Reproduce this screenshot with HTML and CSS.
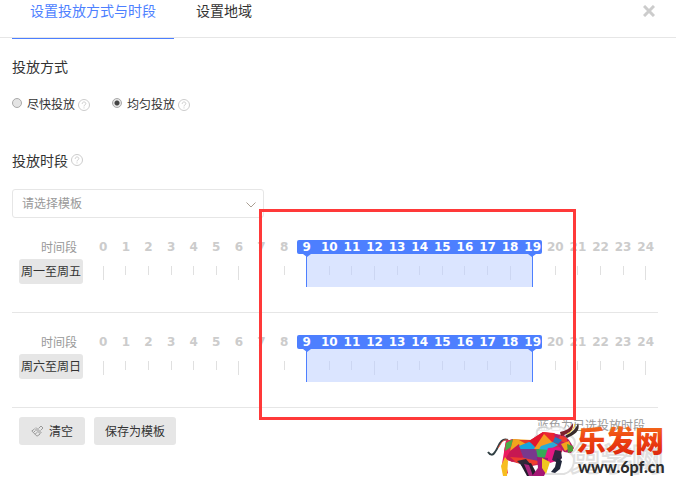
FILE: index.html
```html
<!DOCTYPE html>
<html lang="zh-CN">
<head>
    <meta charset="UTF-8">
    <meta name="viewport" content="width=device-width, initial-scale=1.0">
    <title>设置投放方式与时段</title>
    <link rel="stylesheet" href="styles.css">
</head>
<body>
    <header class="header">
        <nav class="tabs">
            <a href="#time" class="tab active">设置投放方式与时段</a>
            <a href="#area" class="tab">设置地域</a>
        </nav>
        <button class="close" aria-label="关闭">
            <svg width="12" height="12" viewBox="0 0 12 12"><path d="M1 1L11 11M11 1L1 11" stroke="#ccc" stroke-width="3"/></svg>
        </button>
    </header>

    <main class="content">
        <h2>投放方式</h2>
        <div class="modes">
            <div class="mode">
                <input type="radio" name="mode" id="fast">
                <label for="fast">尽快投放</label>
                <svg class="help" viewBox="0 0 12 12"><circle cx="6" cy="6" r="5.5"/><path d="M4.2 4.8C4.2 2.4 7.8 2.4 7.8 4.6C7.8 6 6 5.8 6 7.4M6 8.4V9.4"/></svg>
            </div>
            <div class="mode">
                <input type="radio" name="mode" id="even" checked>
                <label for="even">均匀投放</label>
                <svg class="help" viewBox="0 0 12 12"><circle cx="6" cy="6" r="5.5"/><path d="M4.2 4.8C4.2 2.4 7.8 2.4 7.8 4.6C7.8 6 6 5.8 6 7.4M6 8.4V9.4"/></svg>
            </div>
        </div>

        <h2 class="period-title">投放时段
            <svg class="help" viewBox="0 0 12 12"><circle cx="6" cy="6" r="5.5"/><path d="M4.2 4.8C4.2 2.4 7.8 2.4 7.8 4.6C7.8 6 6 5.8 6 7.4M6 8.4V9.4"/></svg>
        </h2>
        <div class="select-box">
            <select aria-label="请选择模板">
                <option>请选择模板</option>
            </select>
            <svg class="arrow" width="10" height="6" viewBox="0 0 10 6"><path d="M0.5 0.5L5 5L9.5 0.5" fill="none" stroke="#a99e92"/></svg>
        </div>

        <section class="schedule">
            <div class="row">
                <div class="row-label">
                    <span>时间段</span>
                    <button>周一至周五</button>
                </div>
                <div class="scale"></div>
            </div>
            <div class="row">
                <div class="row-label">
                    <span>时间段</span>
                    <button>周六至周日</button>
                </div>
                <div class="scale"></div>
            </div>
            <div class="frame"></div>
        </section>

        <footer class="footer">
            <button class="clear">
                <svg width="13" height="12" viewBox="0 0 13 12" fill="none" stroke="#999"><path d="M7.5 3.5L10 1L12 3L9.5 5.5M5 2.5L10.5 8M4 3.5L9.5 9M3.5 4L0.8 6L6 11.2L9 9.2M2.5 7.5L4.5 5.5M4.2 9.2L6.2 7.2"/></svg>
                清空
            </button>
            <button>保存为模板</button>
            <span class="note">蓝色为已选投放时段</span>
            <svg class="logo" width="190" height="66" viewBox="484 418 190 66">
                <defs>
                    <linearGradient id="fire" x1="0" y1="0" x2="0" y2="1">
                        <stop offset="0" stop-color="#f58220"/>
                        <stop offset="0.5" stop-color="#ee4312"/>
                        <stop offset="1" stop-color="#d8200c"/>
                    </linearGradient>
                </defs>
                <g class="ghost">
                    <path d="M537 435C535 427 545 425 549 429C556 424 568 427 567 435C578 437 576 447 570 449C577 457 575 471 564 474H541C536 474 536 468 541 467C533 461 535 452 543 450C535 449 532 439 537 435Z"/>
                    <text x="570" y="470">兔学网</text>
                </g>
                <path d="M508 440C500 437 499 447 495 452C493 456 490 455 488 452" fill="none" stroke="#303f43" stroke-width="2"/>
                <path d="M508 440C502 439 501 444 498 448" fill="none" stroke="#e5523c" stroke-width="1"/>
                <path d="M506 441L513 439L529 441L543 432L556 434L566 438L562 452L548 463L532 466L517 463L506 460L504 451Z" fill="#d02a4e"/>
                <path d="M506 441L513 439L511 453L505 459L508 473L504 476L502 464L504 452Z" fill="#ec1b5f"/>
                <path d="M505 457L508 461L507 476H503L501 466Z" fill="#f7bd20"/>
                <path d="M513 439L532 440L519 447L510 451Z" fill="#f2a51d"/>
                <path d="M519 440L532 440L526 444Z" fill="#e3392c"/>
                <path d="M506 443L513 439L511 447L505 451Z" fill="#4dac45"/>
                <path d="M510 451L519 444L523 457L512 462L506 458Z" fill="#c71852"/>
                <path d="M519 446L529 442L542 445L534 449L521 450Z" fill="#16a5dd"/>
                <path d="M520 449L534 449L545 457L542 462L524 459Z" fill="#79388d"/>
                <path d="M510 457L524 458L543 462L532 465L517 463Z" fill="#ee3e2e"/>
                <path d="M517 461L526 459L532 466L523 467Z" fill="#2f2738"/>
                <path d="M521 465L531 463L538 476H527Z" fill="#241d2d"/>
                <path d="M524 464L529 465L533 476H529Z" fill="#a7257c"/>
                <path d="M529 441L543 432L546 443L536 448Z" fill="#e3172e"/>
                <path d="M543 432L554 433L563 438L557 445L546 442Z" fill="#eb252f"/>
                <path d="M544 434L553 443L541 449L534 449Z" fill="#f79b21"/>
                <path d="M541 446L553 442L558 445L549 450L538 451Z" fill="#28acd9"/>
                <path d="M536 449L550 450L546 459L538 459Z" fill="#36a957"/>
                <path d="M548 448L561 447L559 460L550 463L544 460Z" fill="#e51882"/>
                <path d="M537 457L548 458L548 467L544 476H532L538 468Z" fill="#a51674"/>
                <path d="M542 458L550 462L546 474L542 468Z" fill="#f0c71f"/>
                <path d="M555 450L561 451L562 458L558 463L552 460Z" fill="#352540"/>
                <path d="M557 458L562 461L560 469L555 473L551 472L555 467Z" fill="#202739"/>
                <path d="M554 434L564 435L569 440L574 448L571 453L564 452L558 445Z" fill="#b71d68"/>
                <path d="M560 435L567 438L567 444L559 440Z" fill="#ee3c2e"/>
                <path d="M561 444L569 441L571 447L565 451Z" fill="#f3a31d"/>
                <path d="M567 444L573 446L573 451L568 453Z" fill="#4e9d38"/>
                <path d="M555 437L562 440L558 444L553 442Z" fill="#2674b8"/>
                <path d="M561 436C569 434 574 430 573 423C570 429 565 431 560 432Z" fill="#7d222c"/>
                <path d="M567 438C574 435 581 431 578 423C576 430 570 433 565 436Z" fill="#392c2b"/>
                <path d="M567 434C572 432 574 428 575 424" fill="none" stroke="#e6c322"/>
                <text class="brand" x="577" y="452">乐发网</text>
                <text class="site" x="578" y="473">www.6pf.cn</text>
            </svg>
        </footer>
    </main>

    <script>
        const start = 9;
        const end = 19;

        document.querySelectorAll('.scale').forEach(scale => {
            const area = `grid-column: ${start + 1} / ${end + 2}`;
            let html = `<div class="bar" style="${area}"></div><div class="range" style="${area}"></div>`;
            for (let h = 0; h <= 24; h++) {
                const on = h >= start && h <= end ? ' on' : '';
                const edge = h === start || h === end ? ' edge' : '';
                const big = h % 6 === 0 ? ' big' : '';
                html += `<div class="hour${on}${edge}${big}" style="grid-column: ${h + 1}">${h}</div>`;
            }
            scale.innerHTML = html;
        });
    </script>
</body>
</html>
```
FILE: styles.css
```css
body {
    font-family: "Noto Sans CJK SC", sans-serif;
    font-size: 12px;
    line-height: 16px;
    color: #333;
    background-color: #fff;
    margin: 0;
    min-height: 100vh;
}
button, select {
    font-family: inherit;
    font-size: 12px;
    line-height: 16px;
    color: #333;
    cursor: pointer;
}
button {
    background-color: #e6e6e6;
    border: none;
    border-radius: 3px;
    padding: 0;
}
.header {
    display: flex;
    justify-content: space-between;
    align-items: flex-start;
    height: 37px;
    border-bottom: 1px solid #e6e6e6;
    padding: 0 21px 0 12px;
}
.tabs {
    display: flex;
    gap: 4px;
}
.tab {
    height: 38px;
    padding: 0 18px;
    font-size: 14px;
    line-height: 20px;
    color: #333;
    text-decoration: none;
}
.tab.active {
    color: #4d7fff;
    border-bottom: 1px solid #4d7fff;
}
.close {
    display: flex;
    background: none;
    margin-top: 5px;
}
.content {
    padding: 18px 18px 43px 12px;
}
h2 {
    margin: 0;
    font-size: 14px;
    font-weight: normal;
    line-height: 20px;
}
.help {
    width: 12px;
    height: 12px;
    fill: none;
    stroke: #ccc;
}
.modes {
    display: flex;
    gap: 22px;
    margin-top: 20px;
}
.mode {
    display: flex;
    align-items: center;
}
.mode .help {
    margin: 2px 0 0 3px;
}
input[type="radio"] {
    appearance: none;
    width: 10px;
    height: 10px;
    margin: 0 5px 2px 0;
    border: 1px solid #aaa;
    border-radius: 50%;
    background-color: #e4e4e4;
}
input[type="radio"]:checked {
    background-image: radial-gradient(circle, #444 2px, transparent 3px);
}
.period-title {
    display: flex;
    align-items: center;
    gap: 3px;
    margin-top: 38px;
}
.select-box {
    position: relative;
    width: 252px;
    margin-top: 19px;
}
select {
    display: block;
    appearance: none;
    width: 100%;
    height: 29px;
    padding: 0 9px 2px;
    border: 1px solid #e6e6e6;
    border-radius: 3px;
    background-color: #fff;
    color: #999;
}
.arrow {
    position: absolute;
    right: 8px;
    top: 13px;
    pointer-events: none;
}
.schedule {
    position: relative;
    padding-top: 21px;
}
.row {
    display: flex;
    height: 73px;
    margin-bottom: 21px;
    border-bottom: 1px solid #e6e6e6;
}
.row:nth-child(2) {
    margin-bottom: 0;
}
.row-label {
    display: flex;
    flex-direction: column;
    align-items: flex-end;
    width: 71px;
    margin-right: 9px;
    color: #999;
}
.row-label span {
    margin-right: 6px;
}
.row-label button {
    width: 64px;
    height: 25px;
    margin-top: 4px;
    padding-bottom: 2px;
}
.scale {
    flex: 1;
    display: grid;
    grid-template-columns: repeat(25, 1fr);
    grid-template-rows: 15px 33px;
    margin-right: 1px;
}
.bar {
    grid-row: 1;
    margin: 1px 2px 0;
    border-radius: 2px;
    background-color: #4d7fff;
}
.range {
    position: relative;
    grid-row: 2;
    margin: 0 11px;
    border: 1px solid #4d7fff;
    border-width: 0 1px;
    background-color: #dbe5ff;
}
.range::before, .range::after {
    content: "";
    position: absolute;
    top: 0;
    left: -4px;
    border: 4px solid transparent;
    border-top: 3px solid #4d7fff;
    border-bottom: none;
}
.range::after {
    left: auto;
    right: -4px;
}
.hour {
    z-index: 1;
    grid-row: 1 / 3;
    display: flex;
    flex-direction: column;
    align-items: center;
    font-family: "DejaVu Sans", Verdana, sans-serif;
    font-size: 12px;
    font-weight: bold;
    line-height: 16px;
    color: #ccc;
}
.hour::after {
    content: "";
    width: 1px;
    height: 9px;
    margin-top: 11px;
    background-color: #e0e0e0;
}
.hour.big::after {
    height: 14px;
}
.hour.on {
    color: #fff;
}
.hour.on::after {
    background-color: #ccd6f2;
}
.hour.edge::after {
    background: none;
}
.frame {
    position: absolute;
    z-index: 2;
    top: -9px;
    bottom: -12px;
    left: 247px;
    right: 82px;
    border: 3px solid #ff3939;
    pointer-events: none;
}
.footer {
    position: relative;
    display: flex;
    gap: 9px;
    padding: 9px 13px 0 7px;
}
.footer button {
    display: flex;
    align-items: center;
    height: 28px;
    padding: 0 11px;
}
.footer .clear {
    gap: 5px;
    padding: 0 12px;
}
.note {
    margin-left: auto;
    color: #999;
}
.logo {
    position: absolute;
    top: 10px;
    right: -16px;
}
.ghost {
    fill: #fff;
    stroke: #d9d9d9;
    stroke-width: 2px;
    opacity: 0.8;
}
.ghost text {
    font-size: 31px;
    font-weight: bold;
}
.brand {
    fill: url(#fire);
    font-size: 29px;
    font-weight: 900;
}
.site {
    fill: #2d2d2d;
    font-family: Lato, sans-serif;
    font-size: 16px;
    font-weight: 900;
}
```
